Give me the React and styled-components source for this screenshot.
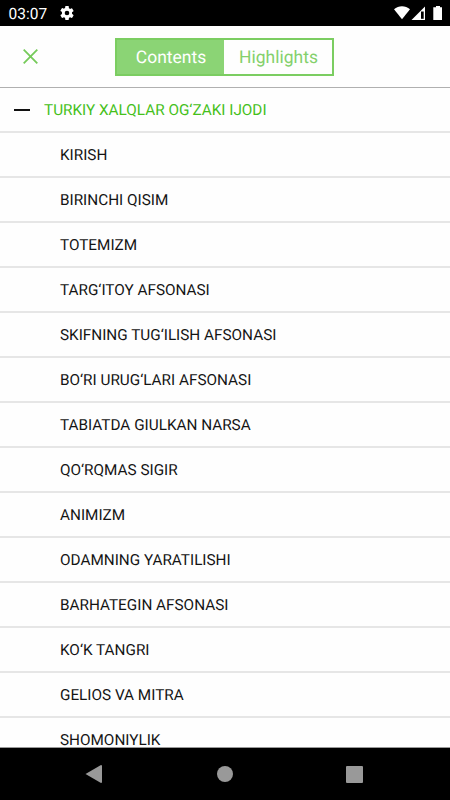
import React, { useState } from 'react'
import styled, { createGlobalStyle } from 'styled-components'

const GlobalStyle = createGlobalStyle`
    *{
        box-sizing: border-box;
    }
    body{
        margin: 0;
        overflow: hidden;
        font-family: Roboto, "Liberation Sans", sans-serif;
        text-rendering: geometricPrecision;
    }
    button{
        font-family: inherit;
        text-rendering: inherit;
        cursor: pointer;
    }
`

const Screen = styled.div`
    display: flex;
    flex-direction: column;
    width: 450px;
    height: 800px;
    background: #fefefe;
`

const StatusBar = styled.div`
    display: flex;
    align-items: center;
    justify-content: space-between;
    flex: 0 0 26px;
    padding: 0 8px 0 8.5px;
    background: #000;
    color: white;
    font-size: 15.5px;
    line-height: 22px;
    svg{
        display: block;
    }
`

const Clock = styled.div`
    display: flex;
    align-items: center;
    gap: 12px;
    & > span{
        padding-top: 2px;
    }
`

const Header = styled.header`
    display: flex;
    align-items: center;
    flex: 0 0 62px;
    padding-left: 23px;
    border-bottom: 1px solid #b0b0b0;
`

const Close = styled.button`
    display: grid;
    place-items: center;
    width: 15px;
    height: 15px;
    margin-right: 77px;
    padding: 0;
    border: none;
    background: transparent;
`

const Tabs = styled.div`
    display: flex;
    width: 219px;
    height: 38px;
    border: 2px solid #7bcd61;
`

const Tab = styled.button`
    flex: ${({ $grow }) => $grow} 1 0;
    padding: 3px 0 0 1px;
    border: none;
    font-size: 17.5px;
    color: ${({ $active }) => ($active ? 'white' : '#84d06c')};
    background: ${({ $active }) => ($active ? '#8bd475' : 'transparent')};
`

const List = styled.main`
    flex: 1;
    min-height: 0;
    overflow: hidden;
    border-bottom: 1px solid #999;
`

const Row = styled.div`
    display: flex;
    align-items: center;
    height: 45px;
    padding: 0 0 0 60px;
    border-bottom: 2px solid #e6e6e6;
    color: #141414;
    font-size: 15.3px;
    white-space: nowrap;
`

const SectionRow = styled(Row)`
    gap: 14px;
    padding-left: 14px;
    color: #45c01a;
`

const Minus = styled.span`
    width: 16px;
    height: 2px;
    background: #111;
`

const NavBar = styled.nav`
    display: flex;
    align-items: center;
    justify-content: space-between;
    flex: 0 0 52px;
    padding: 0 87px 0 85px;
    background: #000;
    svg{
        display: block;
        fill: #999;
    }
`

const chapters = [
    'KIRISH',
    'BIRINCHI QISIM',
    'TOTEMIZM',
    'TARG‘ITOY AFSONASI',
    'SKIFNING TUG‘ILISH AFSONASI',
    'BO‘RI URUG‘LARI AFSONASI',
    'TABIATDA GIULKAN NARSA',
    'QO‘RQMAS SIGIR',
    'ANIMIZM',
    'ODAMNING YARATILISHI',
    'BARHATEGIN AFSONASI',
    'KO‘K TANGRI',
    'GELIOS VA MITRA',
    'SHOMONIYLIK',
]

function App() {
    const [tab, setTab] = useState('contents')
    return (
        <Screen>
            <GlobalStyle />
            <StatusBar>
                <Clock>
                    <span>03:07</span>
                    <svg width="16" height="14" viewBox="2 2 20 20" fill="white">
                        <path d="M19.14 12.94c.04-.3.06-.61.06-.94s-.02-.64-.07-.94l2.03-1.58a.49.49 0 0 0 .12-.61l-1.92-3.32a.49.49 0 0 0-.59-.22l-2.39.96a7 7 0 0 0-1.62-.94l-.36-2.54A.48.48 0 0 0 13.92 2h-3.84a.48.48 0 0 0-.48.41l-.36 2.54a7 7 0 0 0-1.62.94l-2.39-.96a.48.48 0 0 0-.59.22L2.72 8.47a.48.48 0 0 0 .12.61l2.03 1.58a7 7 0 0 0 0 2.68l-2.03 1.58a.49.49 0 0 0-.12.61l1.92 3.32c.12.22.37.29.59.22l2.39-.96c.5.38 1.03.7 1.62.94l.36 2.54c.05.24.24.41.48.41h3.84c.24 0 .44-.17.48-.41l.36-2.54a7 7 0 0 0 1.62-.94l2.39.96c.22.08.47 0 .59-.22l1.92-3.32a.48.48 0 0 0-.12-.61zM12 15.3a3.3 3.3 0 1 1 0-6.6 3.3 3.3 0 0 1 0 6.6z" />
                    </svg>
                </Clock>
                <svg width="48" height="14" viewBox="0 0 48 14" fill="white">
                    <path d="M0 3.2C4.6-.9 11.4-.9 16 3.2L8 13.3z" />
                    <path d="M17.5 14 31 .5V14z" />
                    <path d="M27 5.5h2.7v7.3H27z" fill="black" />
                    <path d="M42 0h4v1.3h2V14h-8.7V1.3H42z" />
                </svg>
            </StatusBar>
            <Header>
                <Close aria-label="Close">
                    <svg width="15" height="15" viewBox="0 0 15 15" stroke="#75ca5a" strokeWidth="1.8">
                        <path d="M.7.7l13.6 13.6M14.3.7.7 14.3" />
                    </svg>
                </Close>
                <Tabs>
                    <Tab $grow={107} $active={tab === 'contents'} onClick={() => setTab('contents')}>Contents</Tab>
                    <Tab $grow={108} $active={tab === 'highlights'} onClick={() => setTab('highlights')}>Highlights</Tab>
                </Tabs>
            </Header>
            <List>
                <SectionRow>
                    <Minus />
                    TURKIY XALQLAR OG‘ZAKI IJODI
                </SectionRow>
                {chapters.map((chapter) => <Row key={chapter}>{chapter}</Row>)}
            </List>
            <NavBar>
                <svg width="19" height="18" viewBox="0 0 19 18"><path d="M.5 9 16 0q1 0 1 1v16q0 1-1 1z" /></svg>
                <svg width="16" height="16" viewBox="0 0 16 16"><circle cx="8" cy="8" r="8" /></svg>
                <svg width="17" height="17" viewBox="0 0 17 17"><rect width="17" height="17" rx="1" /></svg>
            </NavBar>
        </Screen>
    )
}

export default App
